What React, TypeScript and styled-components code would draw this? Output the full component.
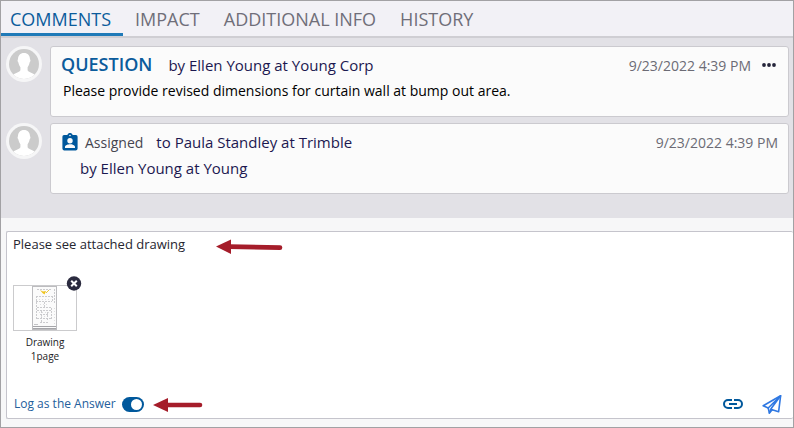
import React, { useState } from "react";
import styled, { createGlobalStyle } from "styled-components";

const GlobalStyle = createGlobalStyle`
  *, *::before, *::after { box-sizing: border-box; }
  body { margin: 0; font-family: "Open Sans", "Noto Sans", sans-serif; }
  button, input, textarea { font: inherit; }
`;

const Page = styled.div`
  min-height: 100vh;
  display: flex;
  flex-direction: column;
  border: 1px solid #a2a1a4;
  background: #f7f7f8;
`;

const TabBar = styled.nav`
  display: flex;
  height: 37px;
  background: #f2f1f6;
  border-bottom: 2px solid #cfced3;
`;

const Tab = styled.button<{ $active: boolean }>`
  border: 0;
  border-bottom: 3px solid ${(p) => (p.$active ? "#1f7ab8" : "transparent")};
  background: none;
  padding: 4px 12px 0;
  font-size: 18px;
  line-height: 28px;
  color: ${(p) => (p.$active ? "#0b5c9c" : "#6f6e79")};
  white-space: nowrap;
  cursor: pointer;

  &:first-child {
    padding: 4px 12px 0 9px;
  }
`;

const Feed = styled.section`
  display: flex;
  flex-direction: column;
  gap: 6px;
  padding: 8px 4px 24px 5px;
  background: #e2e1e6;
`;

const Entry = styled.article`
  display: flex;
  align-items: flex-start;
  gap: 8px;
`;

const AvatarSvg = styled.svg`
  flex: none;
  width: 36px;
  height: 36px;
`;

const Card = styled.div`
  flex: 1;
  min-width: 0;
  min-height: 71px;
  padding: 6px 10px 8px;
  border: 1px solid #cbcacf;
  border-radius: 3px;
  background: #fbfbfb;
`;

const CardHead = styled.header`
  display: flex;
  align-items: baseline;
  height: 24px;
`;

const Kind = styled.h2`
  margin: 0 16px 0 0;
  font-size: 18px;
  font-weight: 600;
  line-height: 22px;
  color: #0b5c9c;
`;

const Status = styled.span`
  margin: 0 13px 0 7px;
  font-size: 14px;
  line-height: 24px;
  color: #45454f;
`;

const Person = styled.span`
  font-size: 15px;
  line-height: 24px;
  color: #1c1850;
`;

const PersonLine = styled.p`
  margin: 2px 0 0 19px;
  font-size: 15px;
  line-height: 24px;
  color: #1c1850;
`;

const Stamp = styled.time`
  margin-left: auto;
  font-size: 14px;
  line-height: 24px;
  color: #6c6b75;
`;

const Message = styled.p`
  margin: 2px 0 0 2px;
  font-size: 14px;
  font-weight: 500;
  line-height: 24px;
  color: #000;
`;

const IconButton = styled.button`
  display: flex;
  align-items: center;
  justify-content: center;
  padding: 0;
  border: 0;
  background: none;
  cursor: pointer;
`;

const MoreButton = styled(IconButton)`
  align-self: center;
  margin: 0 2px 0 11px;
`;

const BadgeSvg = styled.svg`
  align-self: center;
  margin-left: 1px;
`;

const Composer = styled.form`
  position: relative;
  flex: 1;
  display: flex;
  flex-direction: column;
  margin: 13px 0 8px 5px;
  padding: 3px 11px 2px 6px;
  border: 1px solid #c5c4cc;
  border-right: 0;
  border-radius: 2px;
  background: #fff;
`;

const Reply = styled.textarea`
  width: 100%;
  height: 40px;
  padding: 0;
  border: 0;
  outline: 0;
  resize: none;
  background: none;
  font-size: 13px;
  line-height: 18px;
  color: #262630;
`;

const Attachment = styled.figure`
  position: relative;
  width: 64px;
  margin: 10px 0 0;
`;

const Thumb = styled.div`
  display: flex;
  justify-content: center;
  height: 46px;
  border: 1px solid #cbcbcd;
`;

const Caption = styled.figcaption`
  margin-top: 4px;
  font-size: 10px;
  line-height: 14px;
  text-align: center;
  color: #1c1c24;
`;

const RemoveButton = styled(IconButton)`
  position: absolute;
  top: -10px;
  right: -5px;
`;

const Footer = styled.footer`
  display: flex;
  align-items: center;
  margin-top: auto;
  height: 24px;
`;

const SwitchLabel = styled.label`
  display: flex;
  align-items: center;
  gap: 6px;
  padding-left: 1px;
  font-size: 12px;
  line-height: 20px;
  color: #24609c;
`;

const Switch = styled.input`
  appearance: none;
  display: flex;
  align-items: center;
  width: 22px;
  height: 15px;
  margin: 0;
  padding: 0 2px;
  border-radius: 8px;
  background: #8d8c96;
  cursor: pointer;

  &::before {
    content: "";
    width: 11px;
    height: 11px;
    border-radius: 50%;
    background: #fff;
  }

  &:checked {
    justify-content: flex-end;
    background: #00589c;
  }
`;

const Tools = styled.div`
  display: flex;
  align-items: center;
  gap: 19px;
  margin-left: auto;
`;

const Pointer = styled.svg<{ $left: number; $from: "top" | "bottom"; $gap: number }>`
  position: absolute;
  left: ${(p) => p.$left}px;
  ${(p) => p.$from}: ${(p) => p.$gap}px;
  pointer-events: none;
`;

const Avatar = () => (
  <AvatarSvg viewBox="0 0 36 36" aria-hidden="true">
    <circle cx="18" cy="18" r="18" fill="#f6f6f7" />
    <circle cx="18" cy="18" r="15" fill="#cbcbcb" />
    <path
      d="M18 7C14.2 7 12 9.6 12 13.2C11.3 13.4 11.5 16 12.4 16.6C12.8 18.9 13.6 20.2 14.4 21.2V24.2C13.6 26.4 9.4 26.6 7.4 28.6A15 15 0 0 0 28.6 28.6C26.6 26.6 22.4 26.4 21.6 24.2V21.2C22.4 20.2 23.2 18.9 23.6 16.6C24.5 16 24.7 13.4 24 13.2C24 9.6 21.8 7 18 7Z"
      fill="#fff"
    />
  </AvatarSvg>
);

const BadgeIcon = () => (
  <BadgeSvg width="16" height="18" viewBox="0 0 16 18" aria-hidden="true">
    <path
      fill="#00589c"
      fillRule="evenodd"
      d="M2 2H5.3A2.8 2.8 0 0 1 10.7 2H14A1.8 1.8 0 0 1 15.6 3.8V15.6A1.8 1.8 0 0 1 14 17.4H2A1.8 1.8 0 0 1 .4 15.6V3.8A1.8 1.8 0 0 1 2 2ZM8 1.7A.8.8 0 0 0 8 3.3A.8.8 0 0 0 8 1.7ZM8 5A2.7 2.7 0 1 0 8 10.4A2.7 2.7 0 1 0 8 5ZM3 15H13V13.8C13 12.2 9.8 11.3 8 11.3S3 12.2 3 13.8Z"
    />
  </BadgeSvg>
);

const Sheet = () => (
  <svg width="26" height="44" viewBox="0 0 26 44" aria-hidden="true">
    <rect x=".5" y=".5" width="24" height="43" fill="#fbfbfb" stroke="#bcbcbf" />
    <g fill="none" stroke="#cbcbce" strokeDasharray="2 1">
      <path d="M5 3.5H20M4 10.5H21M4 15.5H20M5 21.5H20M5 24.5H19M8 28.5H16M5 32.5H19M8 36.5H16" />
      <path d="M4.500 10V33M20.500 10V16M12.500 16V22M19.500 22V33M9.500 25V36M15.500 26V34M22.500 3V18" />
    </g>
    <g stroke="#dededf">
      <path d="M7 13.500H18M8 18.500H17M7 26.500H18M9 30.500H15M22.500 22V38" strokeDasharray="1 2" />
    </g>
    <path d="M8 4L11 5.500L14 5L12.500 8.500L10.500 7Z" fill="#efc41c" />
    <path d="M14 7L17 4" stroke="#edc839" />
    <path d="M1 40.500H24M1 42.500H24" stroke="#a5a5a9" />
    <path d="M2 38.500H6" stroke="#c3c3c6" />
  </svg>
);

const CloseIcon = () => (
  <svg width="16" height="16" viewBox="0 0 16 16" aria-hidden="true">
    <circle cx="8" cy="8.500" r="7.200" fill="#2b2b3f" />
    <path d="M5.200 5.700L10.800 11.300M10.800 5.700L5.200 11.300" stroke="#fff" strokeWidth="2" />
  </svg>
);

const MoreIcon = () => (
  <svg width="14" height="6" viewBox="0 0 14 6" fill="#24243a" aria-hidden="true">
    <circle cx="2" cy="3" r="1.900" />
    <circle cx="7" cy="3" r="1.900" />
    <circle cx="12" cy="3" r="1.900" />
  </svg>
);

const LinkIcon = () => (
  <svg width="20" height="12" viewBox="0 0 20 12" fill="none" stroke="#00589c" strokeWidth="2" aria-hidden="true">
    <path d="M9 2H5A4 4 0 0 0 5 10H9M11 2H15A4 4 0 0 1 15 10H11M6 6H14" />
  </svg>
);

const SendIcon = () => (
  <svg
    width="20"
    height="20"
    viewBox="0 0 20 20"
    fill="none"
    stroke="#2f78e2"
    strokeWidth="1.600"
    strokeLinejoin="round"
    strokeLinecap="round"
    aria-hidden="true"
  >
    <path d="M18.600 1.800L1.200 11.800L6.200 14L7.400 19L10.200 15.800L16.600 17.800Z" />
    <path d="M18.600 1.800L6.200 14M18.600 1.800L9 14.800L7.400 19M9 14.800L10.200 15.800" />
  </svg>
);

const ArrowLong = () => (
  <Pointer $left={209} $from="top" $gap={7} width="68" height="16" viewBox="0 0 68 16" aria-hidden="true">
    <path d="M0 7.500L15 .5V15Z" fill="#a51d2a" />
    <path d="M13 7.600L64 8.600" stroke="#a51d2a" strokeWidth="4.600" strokeLinecap="round" />
  </Pointer>
);

const ArrowShort = () => (
  <Pointer $left={146} $from="bottom" $gap={5} width="50" height="16" viewBox="0 0 50 16" aria-hidden="true">
    <path d="M0 8L15 1V15Z" fill="#a51d2a" />
    <path d="M13 8H47" stroke="#a51d2a" strokeWidth="4.600" strokeLinecap="round" />
  </Pointer>
);

const TABS = ["COMMENTS", "IMPACT", "ADDITIONAL INFO", "HISTORY"];

export default function App() {
  const [active, setActive] = useState(TABS[0]);
  const [reply, setReply] = useState("Please see attached drawing");
  const [isAnswer, setIsAnswer] = useState(true);

  return (
    <>
      <GlobalStyle />
      <Page>
        <TabBar>
          {TABS.map((name) => (
            <Tab key={name} type="button" $active={name === active} onClick={() => setActive(name)}>
              {name}
            </Tab>
          ))}
        </TabBar>
        <Feed>
          <Entry>
            <Avatar />
            <Card>
              <CardHead>
                <Kind>QUESTION</Kind>
                <Person>by Ellen Young at Young Corp</Person>
                <Stamp>9/23/2022 4:39 PM</Stamp>
                <MoreButton type="button" aria-label="More actions">
                  <MoreIcon />
                </MoreButton>
              </CardHead>
              <Message>Please provide revised dimensions for curtain wall at bump out area.</Message>
            </Card>
          </Entry>
          <Entry>
            <Avatar />
            <Card>
              <CardHead>
                <BadgeIcon />
                <Status>Assigned</Status>
                <Person>to Paula Standley at Trimble</Person>
                <Stamp>9/23/2022 4:39 PM</Stamp>
              </CardHead>
              <PersonLine>by Ellen Young at Young</PersonLine>
            </Card>
          </Entry>
        </Feed>
        <Composer onSubmit={(e) => e.preventDefault()}>
          <Reply aria-label="Reply" value={reply} onChange={(e) => setReply(e.target.value)} />
          <Attachment>
            <Thumb>
              <Sheet />
            </Thumb>
            <RemoveButton type="button" aria-label="Remove attachment">
              <CloseIcon />
            </RemoveButton>
            <Caption>
              Drawing
              <br />
              1page
            </Caption>
          </Attachment>
          <Footer>
            <SwitchLabel>
              Log as the Answer
              <Switch
                type="checkbox"
                role="switch"
                checked={isAnswer}
                onChange={(e) => setIsAnswer(e.target.checked)}
              />
            </SwitchLabel>
            <Tools>
              <IconButton type="button" aria-label="Insert link">
                <LinkIcon />
              </IconButton>
              <IconButton type="submit" aria-label="Send">
                <SendIcon />
              </IconButton>
            </Tools>
          </Footer>
          <ArrowLong />
          <ArrowShort />
        </Composer>
      </Page>
    </>
  );
}
